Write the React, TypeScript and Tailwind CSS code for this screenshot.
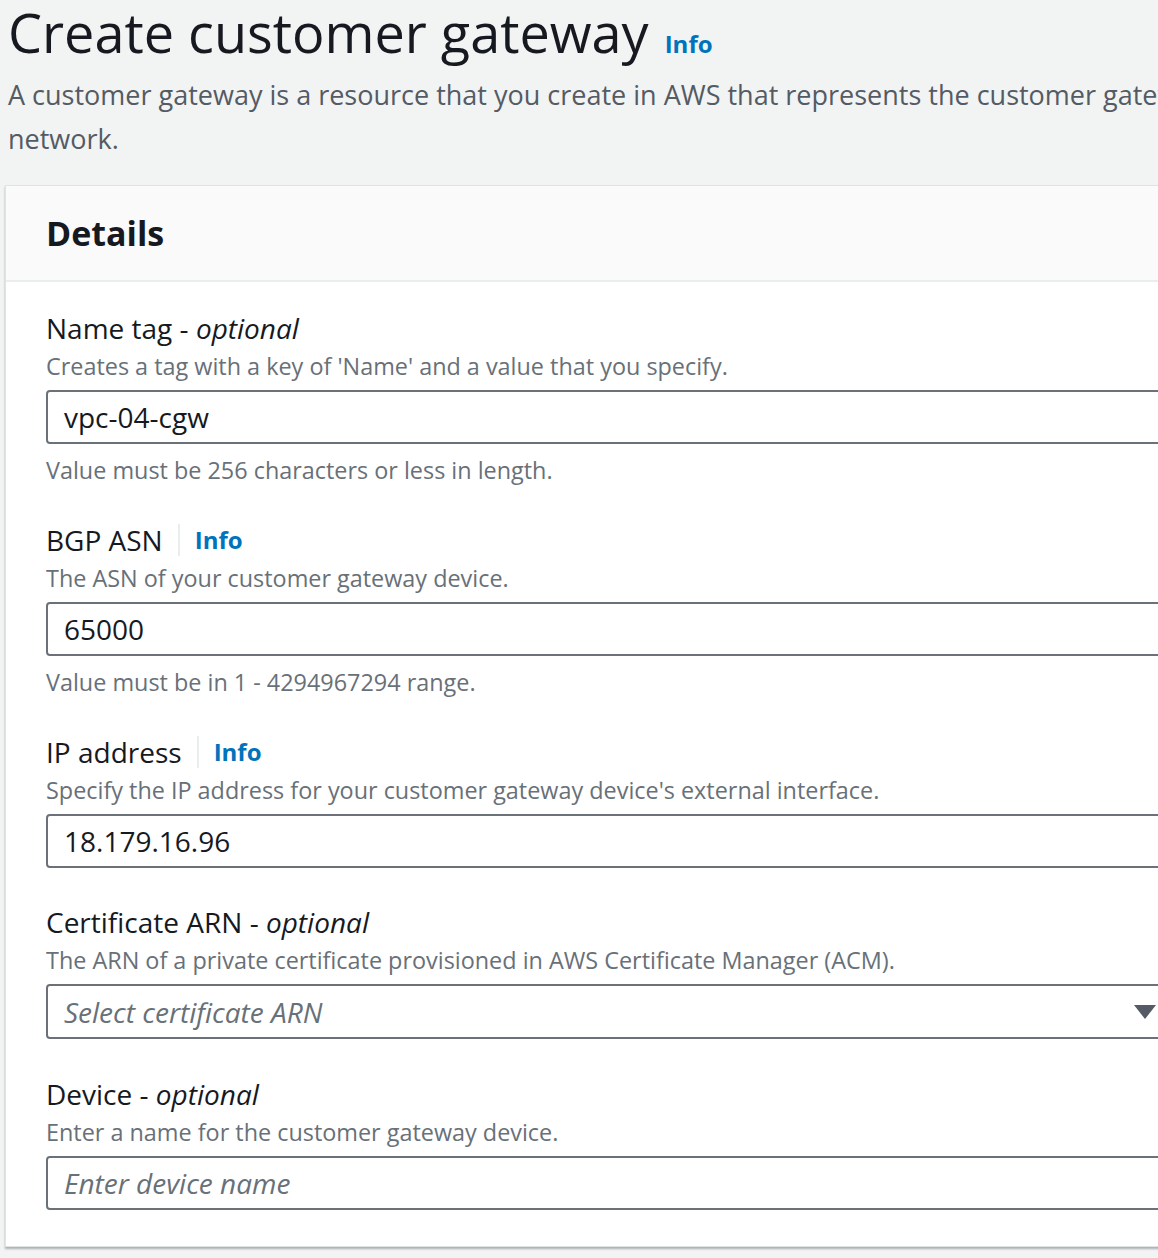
const font = { fontFamily: '"Open Sans", Lato, sans-serif' };

function Info() {
  return <span className="text-[24px] font-bold text-[#0073bb]">Info</span>;
}

function Field({
  label,
  optional,
  info,
  description,
  constraint,
  children,
}: {
  label: string;
  optional?: boolean;
  info?: boolean;
  description: string;
  constraint?: string;
  children: React.ReactNode;
}) {
  return (
    <div>
      <div className="flex h-[44px] items-center text-[28px] leading-[44px] text-[#16191f]">
        <span>
          {label}
          {optional && (
            <>
              {" - "}
              <i>optional</i>
            </>
          )}
        </span>
        {info && (
          <>
            <span className="mx-[15px] h-[32px] w-[2px] bg-[#eaeded]" />
            <Info />
          </>
        )}
      </div>
      <p className="text-[23.4px] leading-[32px] text-[#687078]">{description}</p>
      <div className="mt-[8px]">{children}</div>
      {constraint && (
        <p className="mt-[10px] text-[23.4px] leading-[32px] text-[#687078]">{constraint}</p>
      )}
    </div>
  );
}

function TextInput({ value, placeholder }: { value?: string; placeholder?: string }) {
  return (
    <div className="flex h-[54px] items-center rounded-[4px] border-2 border-[#6b7179] bg-white pl-[16px] text-[28px]">
      {value ? (
        <span className="text-[#16191f]">{value}</span>
      ) : (
        <span className="italic text-[#687078]">{placeholder}</span>
      )}
    </div>
  );
}

export default function App() {
  return (
    <div className="h-[1258px] w-[1158px] overflow-hidden bg-[#f2f3f3]" style={font}>
      <div className="w-[1500px]">
        <div className="px-[8px]">
          <h1 className="flex items-baseline gap-[16px] text-[54px] leading-[64px] text-[#16191f]">
            <span className="whitespace-nowrap">Create customer gateway</span>
            <Info />
          </h1>
          <p className="-mt-[3px] text-[27px] leading-[44px] text-[#545b64]">
            <span className="whitespace-nowrap">
              A customer gateway is a resource that you create in AWS that represents the customer
              gateway device in your on-premises
            </span>
            <br />
            network.
          </p>
        </div>

        <div className="ml-[5px] mt-[24px] w-[1208px] border border-[#dfe3e3] bg-white shadow-[0_2px_2px_0_rgba(0,28,36,0.3)]">
          <div className="flex h-[96px] items-center border-b-2 border-[#eaeded] bg-[#fafafa] px-[40px]">
            <h2 className="text-[34px] font-bold text-[#16191f]">Details</h2>
          </div>
          <div className="flex flex-col gap-[32px] px-[40px] pb-[36px] pt-[24px]">
            <Field
              label="Name tag"
              optional
              description="Creates a tag with a key of 'Name' and a value that you specify."
              constraint="Value must be 256 characters or less in length."
            >
              <TextInput value="vpc-04-cgw" />
            </Field>
            <Field
              label="BGP ASN"
              info
              description="The ASN of your customer gateway device."
              constraint="Value must be in 1 - 4294967294 range."
            >
              <TextInput value="65000" />
            </Field>
            <Field
              label="IP address"
              info
              description="Specify the IP address for your customer gateway device's external interface."
            >
              <TextInput value="18.179.16.96" />
            </Field>
            <Field
              label="Certificate ARN"
              optional
              description="The ARN of a private certificate provisioned in AWS Certificate Manager (ACM)."
            >
              <div className="flex h-[55px] items-center justify-between rounded-[4px] border-2 border-[#6b7179] bg-white pl-[16px] pr-[14px] text-[28px]">
                <span className="italic text-[#687078]">Select certificate ARN</span>
                <svg width="22" height="16" viewBox="0 0 22 16">
                  <path d="M0 1 H22 L11 15 Z" fill="#545b64" />
                </svg>
              </div>
            </Field>
            <div className="mt-[1px]">
              <Field
                label="Device"
                optional
                description="Enter a name for the customer gateway device."
              >
                <TextInput placeholder="Enter device name" />
              </Field>
            </div>
          </div>
        </div>
      </div>
    </div>
  );
}
